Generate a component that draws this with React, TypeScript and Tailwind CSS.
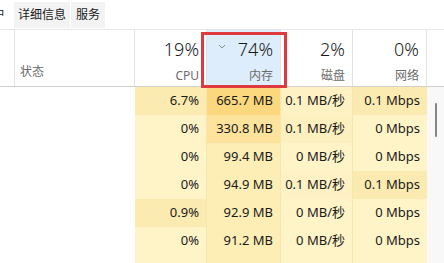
import React from "react";

type Row = {
  cpu: string;
  mem: string;
  disk: string;
  net: string;
  cpuBg: string;
  memBg: string;
  diskBg: string;
  netBg: string;
};

const ROWS: Row[] = [
  { cpu: "6.7%", mem: "665.7 MB", disk: "0.1 MB/秒", net: "0.1 Mbps", cpuBg: "bg-[#fcebb0]", memBg: "bg-[#fbd77e]", diskBg: "bg-[#fef2c4]", netBg: "bg-[#fcebb0]" },
  { cpu: "0%", mem: "330.8 MB", disk: "0.1 MB/秒", net: "0 Mbps", cpuBg: "bg-[#fff4c8]", memBg: "bg-[#fde39c]", diskBg: "bg-[#fdf0bf]", netBg: "bg-[#fff4c8]" },
  { cpu: "0%", mem: "99.4 MB", disk: "0 MB/秒", net: "0 Mbps", cpuBg: "bg-[#fff4c8]", memBg: "bg-[#fdeeb6]", diskBg: "bg-[#fff4c8]", netBg: "bg-[#fff4c8]" },
  { cpu: "0%", mem: "94.9 MB", disk: "0.1 MB/秒", net: "0.1 Mbps", cpuBg: "bg-[#fff4c8]", memBg: "bg-[#fdeeb6]", diskBg: "bg-[#fef2c4]", netBg: "bg-[#fcebb0]" },
  { cpu: "0.9%", mem: "92.9 MB", disk: "0 MB/秒", net: "0 Mbps", cpuBg: "bg-[#fcebb0]", memBg: "bg-[#fdeeb6]", diskBg: "bg-[#fff4c8]", netBg: "bg-[#fff4c8]" },
  { cpu: "0%", mem: "91.2 MB", disk: "0 MB/秒", net: "0 Mbps", cpuBg: "bg-[#fff4c8]", memBg: "bg-[#fdeeb6]", diskBg: "bg-[#fff4c8]", netBg: "bg-[#fff4c8]" },
  { cpu: "", mem: "", disk: "", net: "", cpuBg: "bg-[#fff4c8]", memBg: "bg-[#fdeeb6]", diskBg: "bg-[#fff4c8]", netBg: "bg-[#fff4c8]" },
];

function HeaderCol({ pct, label, width, active }: { pct: string; label: string; width: string; active?: boolean }) {
  return (
    <div className={`relative flex flex-col items-end pr-[7px] border-r border-[#e3e3e3] ${width} ${active ? "bg-[#deedfb]" : ""}`}>
      {active && (
        <svg className="absolute left-[11px] top-[14px]" width="8" height="5" viewBox="0 0 8 5">
          <path d="M1 1 L4 4 L7 1" fill="none" stroke="#8a8a8a" strokeWidth="1" />
        </svg>
      )}
      <span className="mt-[7px] text-[18px] leading-[24px] font-light text-[#1a1a1a]">{pct}</span>
      <span className="mt-[8px] text-[12px] leading-[14px] text-[#6b6b6b]">{label}</span>
    </div>
  );
}

export default function App() {
  return (
    <div
      className="relative w-[444px] h-[263px] overflow-hidden bg-white flex flex-col"
      style={{ fontFamily: '"Noto Sans", "Noto Sans CJK SC", sans-serif' }}
    >
      {/* tabs */}
      <div className="h-[30px] flex items-stretch border-b border-[#e6e6e6] text-[12px] text-[#1a1a1a] shrink-0">
        <div className="w-[14px] overflow-hidden flex items-center">
          <span className="ml-[-19px] whitespace-nowrap">用户</span>
        </div>
        <div className="w-[56px] mt-[2px] mb-[1px] bg-[#f3f3f3] flex items-center justify-center">详细信息</div>
        <div className="w-[34px] mt-[2px] mb-[1px] ml-px bg-[#f3f3f3] flex items-center justify-center">服务</div>
      </div>

      {/* header */}
      <div className="h-[57px] flex shrink-0 border-b border-[#cfcfcf]">
        <div className="w-[15px] border-r border-[#e3e3e3]" />
        <div className="w-[120px] border-r border-[#e3e3e3] flex items-end pl-[5px] pb-[7px]">
          <span className="text-[12px] leading-[14px] text-[#6b6b6b]">状态</span>
        </div>
        <HeaderCol pct="19%" label="CPU" width="w-[72px]" />
        <HeaderCol pct="74%" label="内存" width="w-[74px]" active />
        <HeaderCol pct="2%" label="磁盘" width="w-[72px]" />
        <HeaderCol pct="0%" label="网络" width="w-[74px]" />
        <div className="flex-1" />
      </div>

      {/* rows */}
      <div className="flex flex-1 min-h-0">
        <div className="flex flex-col">
          {ROWS.map((r, i) => (
            <div key={i} className="h-[28px] flex shrink-0 text-[13px] text-[#1a1a1a]">
              <div className="w-[135px] bg-white" />
              <div className={`w-[72px] flex items-center justify-end pr-[7px] border-r border-[#f5e6b2] ${r.cpuBg}`}>{r.cpu}</div>
              <div className={`w-[74px] flex items-center justify-end pr-[7px] border-r border-[#f5e6b2] ${r.memBg}`}>{r.mem}</div>
              <div className={`w-[72px] flex items-center justify-end pr-[7px] border-r border-[#f5e6b2] ${r.diskBg}`}>{r.disk}</div>
              <div className={`w-[74px] flex items-center justify-end pr-[7px] ${r.netBg}`}>{r.net}</div>
            </div>
          ))}
        </div>
        <div className="flex-1 bg-[#f8f8f8] flex justify-center pt-[16px]">
          <div className="w-[2px] h-[34px] rounded-full bg-[#858585]" />
        </div>
      </div>

      {/* highlight box */}
      <div className="absolute left-[201px] top-[32px] w-[86px] h-[56px] border-[3px] border-[#dd3b40]" />
    </div>
  );
}
